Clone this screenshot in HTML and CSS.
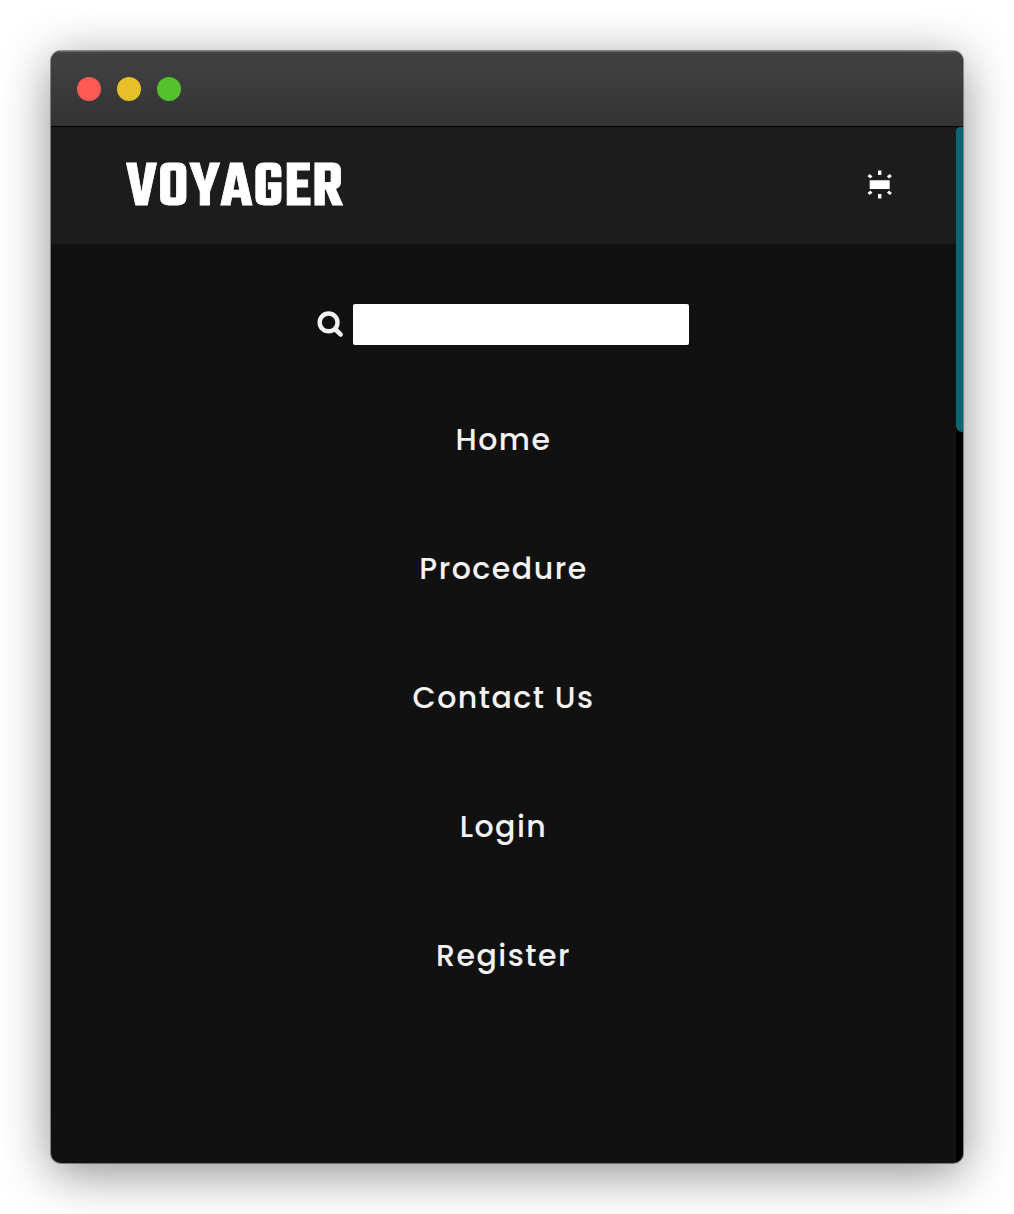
FILE: index.html
```html
<!DOCTYPE html>
<html lang="en">
<head>
<meta charset="utf-8">
<title>Voyager</title>
<link rel="stylesheet" href="styles.css">
</head>
<body>
<main class="window">
  <div class="titlebar">
    <span class="dot red"></span>
    <span class="dot yellow"></span>
    <span class="dot green"></span>
  </div>
  <div class="viewport">
    <div class="page">
      <header class="header">
        <span class="logo">VOYAGER</span>
        <svg class="toggle" width="26" height="30" viewBox="0 0 26 30" fill="#fff">
          <path d="M2.7 10.2h20v8.8h-20zM11 .6h3.4v4.3H11zM11 24.1h3.4v4.3H11z"/>
          <path d="M.5 6.2l2-2.2 3 2.3-2.1 2.3zM24.9 6.2l-2-2.2-3 2.3 2.1 2.3zM.5 22.9l2 2.2 3-2.3-2.1-2.3zM24.9 22.9l-2 2.2-3-2.3 2.1-2.3z"/>
        </svg>
      </header>
      <div class="search">
        <svg width="27" height="27" viewBox="0 0 27 27" fill="none" stroke="#f2f2f2" stroke-linecap="round">
          <circle cx="11.6" cy="11.4" r="8.9" stroke-width="4.4"/>
          <path d="M18.5 18.5l5.1 4.9" stroke-width="4.7"/>
        </svg>
        <input class="field" type="text" aria-label="Search">
      </div>
      <nav class="menu">
        <a class="link">Home</a>
        <a class="link">Procedure</a>
        <a class="link">Contact Us</a>
        <a class="link">Login</a>
        <a class="link">Register</a>
      </nav>
    </div>
    <div class="track"><div class="thumb"></div></div>
  </div>
</main>
</body>
</html>
```
FILE: styles.css
```css
* { box-sizing: border-box; }
body {
  margin: 0;
  height: 1214px;
  padding: 51px;
  overflow: hidden;
  background: #fff;
}
.window {
  width: 912px;
  height: 1112px;
  display: flex;
  flex-direction: column;
  border-radius: 10px;
  overflow: hidden;
  background: #111;
  box-shadow: 0 0 0 1px rgba(0, 0, 0, .38), 0 10px 50px rgba(0, 0, 0, .45);
}
.titlebar {
  flex: 0 0 76px;
  display: flex;
  align-items: center;
  gap: 16px;
  padding-left: 26px;
  background: linear-gradient(#424242, #333);
  border-bottom: 1px solid #000;
  box-shadow: inset 0 1px #686868, inset 0 2px #484848;
}
.dot { width: 24px; height: 24px; border-radius: 50%; }
.red { background: #ff5a54; }
.yellow { background: #e6bf29; }
.green { background: #54c22d; }
.viewport { flex: 1; display: flex; min-height: 0; }
.page { flex: 1; display: flex; flex-direction: column; }
.header {
  height: 117px;
  display: flex;
  align-items: center;
  justify-content: space-between;
  padding: 0 63px 2px 75px;
  background: #1c1c1c;
}
.logo {
  padding-top: 9px;
  white-space: nowrap;
  color: #fff;
  font: 600 66px/70px Teko, Roboto, sans-serif;
  letter-spacing: .8px;
  -webkit-text-stroke: .8px #fff;
}
.search {
  display: flex;
  align-items: center;
  justify-content: center;
  gap: 9px;
  padding: 60px 2px 0 0;
}
.field {
  width: 336px;
  height: 41px;
  padding: 0 10px;
  border: 0;
  border-radius: 2px;
  background: #fff;
  font: 24px Poppins, sans-serif;
}
.menu {
  display: flex;
  flex-direction: column;
  align-items: center;
  gap: 81px;
  padding-top: 71px;
}
.link {
  color: #f2f2f2;
  font: 500 30px/48px Poppins, Inter, sans-serif;
  letter-spacing: 1.5px;
}
.track { width: 7px; background: #000; }
.thumb {
  height: 305px;
  border-radius: 4px 0 0 6px;
  background: #0b6674;
}
```
